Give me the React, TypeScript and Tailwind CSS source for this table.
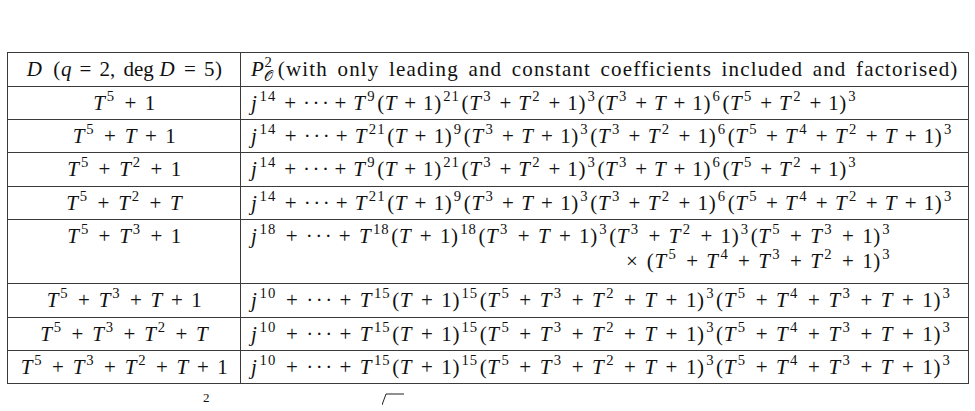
import React from 'react';

// letter boxes, roughly Computer Modern italic widths
const letterW: Record<string, string> = {
  T: 'w-[0.6em]',
  j: 'w-[0.34em]',
  D: 'w-[0.85em]',
  q: 'w-[0.5em]',
};

// spacing around binary operators, per row (the typeset lines differ a little)
const opSpace = {
  n: 'mx-[0.222em]',
  b: 'mx-[0.24em]',
  m: 'mx-[0.29em]',
  w: 'mx-[0.3em]',
};

// tiny math typesetter: letters italic, ^x / ^{xy} superscripts, spaced binary operators
function M({ s, op = 'n' }: { s: string; op?: keyof typeof opSpace }) {
  const out: React.ReactNode[] = [];
  let i = 0;
  let k = 0;
  while (i < s.length) {
    const c = s[i];
    if (c === ' ') {
      i++;
      continue;
    }
    if (c === '^') {
      let sup = '';
      if (s[i + 1] === '{') {
        const end = s.indexOf('}', i);
        sup = s.slice(i + 2, end);
        i = end + 1;
      } else {
        sup = s[i + 1];
        i += 2;
      }
      out.push(
        <sup
          key={k++}
          className="relative -top-[0.62em] align-baseline text-[0.7em] not-italic leading-none ml-[0.1em] mr-[0.07em] tracking-[0.07em]"
        >
          {sup}
        </sup>
      );
      continue;
    }
    if (c === '+' || c === '×') {
      out.push(
        <span key={k++} className={`inline-block w-[0.778em] text-center ${opSpace[op]}`}>
          {c}
        </span>
      );
    } else if (c === '=') {
      out.push(
        <span key={k++} className="inline-block w-[0.778em] text-center mx-[0.278em]">
          {c}
        </span>
      );
    } else if (c === '…') {
      out.push(
        <span key={k++} className="inline-block w-[1.172em] text-center tracking-[0.12em]">
          ···
        </span>
      );
    } else if (c === '(' || c === ')') {
      out.push(
        <span key={k++} className="inline-block w-[0.389em] text-center">
          {c}
        </span>
      );
    } else if (/[A-Za-z]/.test(c)) {
      out.push(
        <i key={k++} className={`inline-block ${letterW[c] ?? ''}`}>
          {c}
        </i>
      );
    } else {
      out.push(<span key={k++}>{c}</span>);
    }
    i++;
  }
  return <span className="whitespace-nowrap">{out}</span>;
}

const A = 'j^{14}+…+T^9(T+1)^{21}(T^3+T^2+1)^3(T^3+T+1)^6(T^5+T^2+1)^3';
const B = 'j^{14}+…+T^{21}(T+1)^9(T^3+T+1)^3(T^3+T^2+1)^6(T^5+T^4+T^2+T+1)^3';
const C = 'j^{10}+…+T^{15}(T+1)^{15}(T^5+T^3+T^2+T+1)^3(T^5+T^4+T^3+T+1)^3';

const rows: { d: string; p: string[]; op: keyof typeof opSpace }[] = [
  { d: 'T^5+1', p: [A], op: 'n' },
  { d: 'T^5+T+1', p: [B], op: 'b' },
  { d: 'T^5+T^2+1', p: [A], op: 'n' },
  { d: 'T^5+T^2+T', p: [B], op: 'b' },
  {
    d: 'T^5+T^3+1',
    p: ['j^{18}+…+T^{18}(T+1)^{18}(T^3+T+1)^3(T^3+T^2+1)^3(T^5+T^3+1)^3', '×(T^5+T^4+T^3+T^2+1)^3'],
    op: 'm',
  },
  { d: 'T^5+T^3+T+1', p: [C], op: 'w' },
  { d: 'T^5+T^3+T^2+T', p: [C], op: 'w' },
  { d: 'T^5+T^3+T^2+T+1', p: [C], op: 'w' },
];

const cell = 'border border-[#3a3a3a] align-top pt-[4px] leading-[25px]';

export default function App() {
  return (
    <div className="min-h-[411px] w-[975px] bg-white text-[#111] font-['Liberation_Serif',serif] text-[21px] overflow-hidden">
      <div className="pt-[52px] pl-[7px]">
        <table className="border-collapse w-[962px]">
          <tbody>
            <tr className="h-[33.4px]">
              <td className={`${cell} w-[233px] text-center whitespace-nowrap`}>
                <i className="inline-block w-[0.85em]">D</i>
                <span className="ml-[0.45em] inline-block w-[0.389em] text-center">(</span>
                <M s="q=2," />
                <span className="ml-[0.4em]">deg</span>
                <span className="ml-[0.2em]">
                  <M s="D=5)" />
                </span>
              </td>
              <td className={`${cell} pl-[10px] text-left whitespace-nowrap`}>
                <i className="inline-block w-[0.64em]">P</i>
                <span className="inline-flex flex-col align-middle leading-none text-[0.7em] -translate-y-[0.12em] mr-[0.3em]">
                  <span className="not-italic">2</span>
                  <span className="font-['DejaVu_Sans',serif] text-[0.95em]">𝒪</span>
                </span>
                <span className="tracking-[0.055em] [word-spacing:0.15em]">
                  (with only leading and constant coefficients included and factorised)
                </span>
              </td>
            </tr>
            {rows.map((r, n) => (
              <tr key={n} className={r.p.length > 1 ? 'h-[64px]' : 'h-[33.4px]'}>
                <td className={`${cell} text-center`}>
                  <M s={r.d} op="m" />
                </td>
                <td className={`${cell} pl-[10px] text-left`}>
                  {r.p.length > 1 ? (
                    <span className="inline-flex flex-col items-end">
                      <M s={r.p[0]} op={r.op} />
                      <M s={r.p[1]} op={r.op} />
                    </span>
                  ) : (
                    <M s={r.p[0]} op={r.op} />
                  )}
                </td>
              </tr>
            ))}
          </tbody>
        </table>
      </div>
      <div className="flex items-start pt-[7px] text-[13px] leading-none">
        <span className="ml-[203px]">2</span>
        <svg className="ml-[172px] mt-[2px]" width="22" height="12" viewBox="0 0 22 12">
          <path d="M0 12 L4 1 L22 1" fill="none" stroke="#222" strokeWidth="1" />
        </svg>
      </div>
    </div>
  );
}
